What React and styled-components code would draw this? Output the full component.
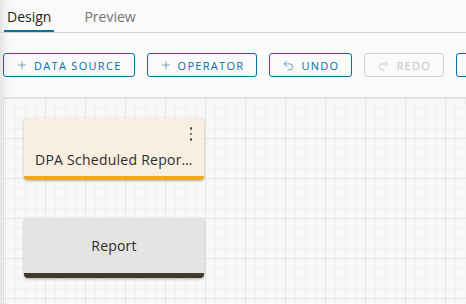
import React from "react"
import styled, { createGlobalStyle } from "styled-components"
import { Plus, Undo2, Redo2 } from "lucide-react"

const Global = createGlobalStyle`
  html, body {
    margin: 0;
    padding: 0;
    height: 100%;
  }
  body {
    font-family: "Open Sans", "Noto Sans", sans-serif;
    background: linear-gradient(to right, #e2e2e2 0, #efefef 4px, #f8f8f8 9px, #fafafa 14px);
    overflow: hidden;
  }
  #root {
    height: 100%;
  }
`

const App = () => {
  return (
    <Page>
      <Global />
      <TabBar>
        <Tab active>Design</Tab>
        <Tab>Preview</Tab>
      </TabBar>
      <Toolbar>
        <ToolButton><Plus size={12} strokeWidth={1.5} />Data Source</ToolButton>
        <ToolButton><Plus size={12} strokeWidth={1.5} />Operator</ToolButton>
        <ToolButton><Undo2 size={13} strokeWidth={1.5} />Undo</ToolButton>
        <ToolButton disabled><Redo2 size={13} strokeWidth={1.5} />Redo</ToolButton>
        <ToolButton wide>Layout</ToolButton>
      </Toolbar>
      <Canvas>
        <Node kind="source">
          <NodeHead>
            <Kebab>
              <span /><span /><span />
            </Kebab>
          </NodeHead>
          <NodeTitle>DPA Scheduled Report Source</NodeTitle>
        </Node>
        <Node kind="report">
          <NodeLabel>Report</NodeLabel>
        </Node>
      </Canvas>
    </Page>
  )
}

export default App

const Page = styled.div`
  height: 100%;
  display: flex;
  flex-direction: column;
`
const TabBar = styled.div`
  display: flex;
  gap: 27px;
  height: 32px;
  padding-left: 4px;
  border-bottom: 1px solid #d4d4d4;
`
const Tab = styled.div`
  height: 32px;
  box-sizing: border-box;
  padding: 3px 3px 0;
  display: flex;
  align-items: center;
  font-size: 14px;
  color: ${p => (p.active ? "#222" : "#737373")};
  border-bottom: 2px solid ${p => (p.active ? "#0072a3" : "transparent")};
`
const Toolbar = styled.div`
  display: flex;
  gap: 12px;
  padding: 20px 0 0 3px;
  overflow: hidden;
  white-space: nowrap;
`
const ToolButton = styled.button`
  flex: none;
  height: 24px;
  box-sizing: border-box;
  padding: 0 ${p => (p.wide ? "20px" : "12px")};
  display: flex;
  align-items: center;
  gap: 6px;
  background: transparent;
  border: 1px solid ${p => (p.disabled ? "#d2d2d2" : "#0072a3")};
  border-radius: 3px;
  color: ${p => (p.disabled ? "#c4c4c4" : "#0072a3")};
  font-family: "Open Sans", "Noto Sans", sans-serif;
  font-size: 11px;
  font-weight: 500;
  letter-spacing: 1.3px;
  text-transform: uppercase;
  svg {
    color: ${p => (p.disabled ? "#c8c8c8" : "#4f8fb3")};
  }
`
const Canvas = styled.div`
  flex: 1;
  margin: 20px 0 0 3px;
  padding: 20px;
  display: flex;
  flex-direction: column;
  gap: 38px;
  border-left: 1px solid #dcdcdc;
  border-top: 1px solid #dedede;
  background:
    linear-gradient(to right, #e5e5e5 1px, transparent 1px) 1px 0 / 40px 40px,
    linear-gradient(to bottom, #e5e5e5 1px, transparent 1px) 0 0 / 40px 40px,
    linear-gradient(to right, #f1f1f1 1px, transparent 1px) 1px 0 / 10px 10px,
    linear-gradient(to bottom, #f1f1f1 1px, transparent 1px) 0 0 / 10px 10px,
    #f8f8f8;
`
const Node = styled.div`
  width: 180px;
  height: ${p => (p.kind === "source" ? "62px" : "60px")};
  box-sizing: border-box;
  display: flex;
  flex-direction: column;
  justify-content: ${p => (p.kind === "source" ? "space-between" : "center")};
  align-items: stretch;
  background: ${p => (p.kind === "source" ? "#f9efe1" : "#e4e4e2")};
  border-bottom: ${p => (p.kind === "source" ? "4px solid #f0a61f" : "5px solid #3f3a2b")};
  border-radius: 4px;
  box-shadow: 0 1px 3px rgba(0, 0, 0, 0.28);
`
const NodeHead = styled.div`
  display: flex;
  justify-content: flex-end;
  padding: 9px 12px 0;
`
const Kebab = styled.div`
  display: flex;
  flex-direction: column;
  gap: 3px;
  span {
    width: 2.5px;
    height: 2.5px;
    border-radius: 50%;
    background: #555;
  }
`
const NodeTitle = styled.div`
  padding: 0 11px 7px;
  font-size: 14px;
  letter-spacing: 0.25px;
  color: #2c2c2c;
  white-space: nowrap;
  overflow: hidden;
  text-overflow: ellipsis;
`
const NodeLabel = styled.div`
  text-align: center;
  font-size: 14px;
  letter-spacing: 0.2px;
  color: #2c2c2c;
`
